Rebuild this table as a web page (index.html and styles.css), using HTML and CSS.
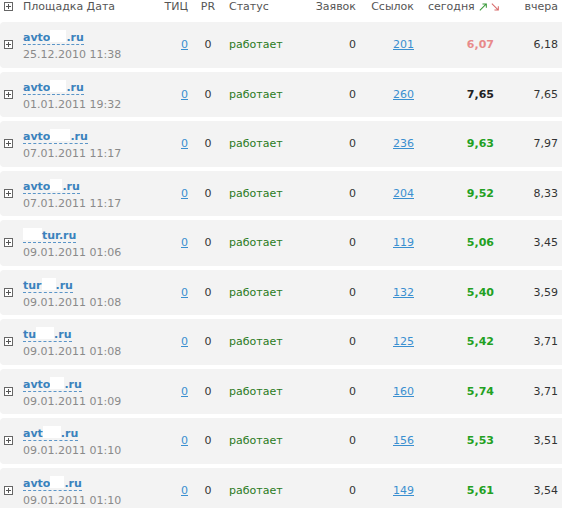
FILE: index.html
```html
<!DOCTYPE html>
<html lang="ru">
<head>
    <meta charset="UTF-8">
    <title>Площадки</title>
    <link rel="stylesheet" href="styles.css">
</head>
<body>

    <!-- Sites list -->
    <div class="sites">
        <div class="row head">
            <div class="cell toggle"><span class="plus"></span></div>
            <div class="cell site">Площадка Дата</div>
            <div class="cell num">ТИЦ</div>
            <div class="cell pr">PR</div>
            <div class="cell status">Статус</div>
            <div class="cell num">Заявок</div>
            <div class="cell num">Ссылок</div>
            <div class="cell today-head">сегодня
                <svg class="arrow" width="10" height="10" viewBox="0 0 10 10"><path d="M1 9L8.5 1.5M4 1.5H8.5V6" stroke="#3a9a3a" stroke-width="1.2" fill="none"/></svg>
                <svg class="arrow" width="10" height="10" viewBox="0 0 10 10"><path d="M1 1L8.5 8.5M8.5 4V8.5H4" stroke="#d86a6a" stroke-width="1.2" fill="none"/></svg>
            </div>
            <div class="cell num">вчера</div>
        </div>

        <div class="row">
            <div class="cell toggle"><span class="plus"></span></div>
            <div class="cell site"><a class="domain" href="#">avto<span class="hide" style="width:16px"></span>.ru</a><span class="date">25.12.2010 11:38</span></div>
            <div class="cell num"><a href="#">0</a></div>
            <div class="cell pr">0</div>
            <div class="cell status ok">работает</div>
            <div class="cell num">0</div>
            <div class="cell num"><a href="#">201</a></div>
            <div class="cell num today down">6,07</div>
            <div class="cell num">6,18</div>
        </div>

        <div class="row">
            <div class="cell toggle"><span class="plus"></span></div>
            <div class="cell site"><a class="domain" href="#">avto<span class="hide" style="width:16px"></span>.ru</a><span class="date">01.01.2011 19:32</span></div>
            <div class="cell num"><a href="#">0</a></div>
            <div class="cell pr">0</div>
            <div class="cell status ok">работает</div>
            <div class="cell num">0</div>
            <div class="cell num"><a href="#">260</a></div>
            <div class="cell num today">7,65</div>
            <div class="cell num">7,65</div>
        </div>

        <div class="row">
            <div class="cell toggle"><span class="plus"></span></div>
            <div class="cell site"><a class="domain" href="#">avto<span class="hide" style="width:20px"></span>.ru</a><span class="date">07.01.2011 11:17</span></div>
            <div class="cell num"><a href="#">0</a></div>
            <div class="cell pr">0</div>
            <div class="cell status ok">работает</div>
            <div class="cell num">0</div>
            <div class="cell num"><a href="#">236</a></div>
            <div class="cell num today up">9,63</div>
            <div class="cell num">7,97</div>
        </div>

        <div class="row">
            <div class="cell toggle"><span class="plus"></span></div>
            <div class="cell site"><a class="domain" href="#">avto<span class="hide" style="width:12px"></span>.ru</a><span class="date">07.01.2011 11:17</span></div>
            <div class="cell num"><a href="#">0</a></div>
            <div class="cell pr">0</div>
            <div class="cell status ok">работает</div>
            <div class="cell num">0</div>
            <div class="cell num"><a href="#">204</a></div>
            <div class="cell num today up">9,52</div>
            <div class="cell num">8,33</div>
        </div>

        <div class="row">
            <div class="cell toggle"><span class="plus"></span></div>
            <div class="cell site"><a class="domain" href="#"><span class="hide" style="width:19px"></span>tur.ru</a><span class="date">09.01.2011 01:06</span></div>
            <div class="cell num"><a href="#">0</a></div>
            <div class="cell pr">0</div>
            <div class="cell status ok">работает</div>
            <div class="cell num">0</div>
            <div class="cell num"><a href="#">119</a></div>
            <div class="cell num today up">5,06</div>
            <div class="cell num">3,45</div>
        </div>

        <div class="row">
            <div class="cell toggle"><span class="plus"></span></div>
            <div class="cell site"><a class="domain" href="#">tur<span class="hide" style="width:14px"></span>.ru</a><span class="date">09.01.2011 01:08</span></div>
            <div class="cell num"><a href="#">0</a></div>
            <div class="cell pr">0</div>
            <div class="cell status ok">работает</div>
            <div class="cell num">0</div>
            <div class="cell num"><a href="#">132</a></div>
            <div class="cell num today up">5,40</div>
            <div class="cell num">3,59</div>
        </div>

        <div class="row">
            <div class="cell toggle"><span class="plus"></span></div>
            <div class="cell site"><a class="domain" href="#">tu<span class="hide" style="width:18px"></span>.ru</a><span class="date">09.01.2011 01:08</span></div>
            <div class="cell num"><a href="#">0</a></div>
            <div class="cell pr">0</div>
            <div class="cell status ok">работает</div>
            <div class="cell num">0</div>
            <div class="cell num"><a href="#">125</a></div>
            <div class="cell num today up">5,42</div>
            <div class="cell num">3,71</div>
        </div>

        <div class="row">
            <div class="cell toggle"><span class="plus"></span></div>
            <div class="cell site"><a class="domain" href="#">avto<span class="hide" style="width:14px"></span>.ru</a><span class="date">09.01.2011 01:09</span></div>
            <div class="cell num"><a href="#">0</a></div>
            <div class="cell pr">0</div>
            <div class="cell status ok">работает</div>
            <div class="cell num">0</div>
            <div class="cell num"><a href="#">160</a></div>
            <div class="cell num today up">5,74</div>
            <div class="cell num">3,71</div>
        </div>

        <div class="row">
            <div class="cell toggle"><span class="plus"></span></div>
            <div class="cell site"><a class="domain" href="#">avt<span class="hide" style="width:18px"></span>.ru</a><span class="date">09.01.2011 01:10</span></div>
            <div class="cell num"><a href="#">0</a></div>
            <div class="cell pr">0</div>
            <div class="cell status ok">работает</div>
            <div class="cell num">0</div>
            <div class="cell num"><a href="#">156</a></div>
            <div class="cell num today up">5,53</div>
            <div class="cell num">3,51</div>
        </div>

        <div class="row">
            <div class="cell toggle"><span class="plus"></span></div>
            <div class="cell site"><a class="domain" href="#">avto<span class="hide" style="width:14px"></span>.ru</a><span class="date">09.01.2011 01:10</span></div>
            <div class="cell num"><a href="#">0</a></div>
            <div class="cell pr">0</div>
            <div class="cell status ok">работает</div>
            <div class="cell num">0</div>
            <div class="cell num"><a href="#">149</a></div>
            <div class="cell num today up">5,61</div>
            <div class="cell num">3,54</div>
        </div>
    </div>

</body>
</html>
```

FILE: styles.css
```css
body {
    font-family: 'DejaVu Sans', Verdana, sans-serif;
    font-size: 11px;
    color: #333;
    background-color: #fff;
    margin: 0;
    padding: 0;
}
.sites {
    display: flex;
    flex-direction: column;
    gap: 4px;
    width: 562px;
}
.row {
    display: grid;
    grid-template-columns: 20px 140px 32px 28px 80px 60px 58px 82px 62px;
    align-items: center;
    height: 45.5px;
    background-color: #f3f3f3;
    border-radius: 4px 0 0 4px;
}
.row.head {
    height: 18px;
    align-items: start;
    line-height: 14px;
    background: none;
    color: #555;
}
.row.head .toggle {
    padding-top: 2px;
}
.row.head .site {
    padding-top: 0;
    line-height: 14px;
}
.cell {
    white-space: nowrap;
}
.toggle {
    display: flex;
    padding-left: 4px;
}
.plus {
    position: relative;
    display: block;
    width: 7px;
    height: 7px;
    border: 1px solid #666;
    background: #fff;
}
.plus::before, .plus::after {
    content: '';
    position: absolute;
    background: #555;
}
.plus::before {
    left: 1px;
    top: 3px;
    width: 5px;
    height: 1px;
}
.plus::after {
    left: 3px;
    top: 1px;
    width: 1px;
    height: 5px;
}
.site {
    display: flex;
    flex-direction: column;
    align-items: flex-start;
    padding-left: 3px;
    padding-top: 4px;
    line-height: 16px;
}
.domain {
    color: #3a82bd;
    font-weight: bold;
    text-decoration: none;
    line-height: 13px;
    border-bottom: 1px dashed #5a95c8;
}
.hide {
    display: inline-block;
    height: 12px;
    background: #fff;
    vertical-align: -1px;
}
.date {
    color: #8a8a8a;
    margin-top: 2px;
}
.num {
    text-align: right;
    padding-right: 4px;
}
.num a {
    color: #3a8fd0;
    text-decoration: underline;
}
.pr {
    text-align: center;
    padding-left: 4px;
}
.status {
    padding-left: 9px;
}
.status.ok {
    color: #2a7a22;
}
.today {
    font-weight: bold;
    color: #222;
    padding-right: 6px;
}
.today.up {
    color: #22a022;
}
.today.down {
    color: #e88a8a;
}
.today-head {
    padding-left: 10px;
    display: flex;
    align-items: center;
    gap: 2px;
}
.arrow {
    display: block;
    margin-left: 2px;
}
```
